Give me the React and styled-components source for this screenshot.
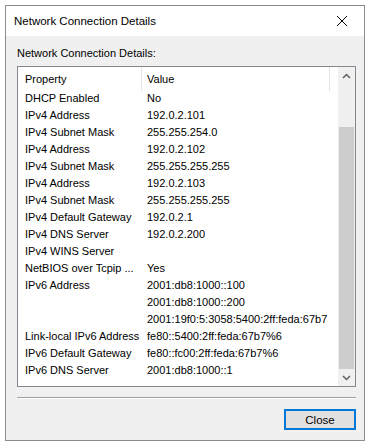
import React from "react";
import styled, { createGlobalStyle } from "styled-components";

const Global = createGlobalStyle`
  html, body { margin: 0; padding: 0; background: #ffffff; }
  body { font-family: "Liberation Sans", Arial, sans-serif; font-size: 11px; color: #000; }
`;

const Page = styled.div`
  padding: 5px;
`;

const Window = styled.div`
  width: 358px;
  height: 434px;
  border: 1px solid #8c8c8c;
  background: #f0f0f0;
  display: flex;
  flex-direction: column;
`;

const TitleBar = styled.div`
  height: 30px;
  background: #ffffff;
  display: flex;
  align-items: center;
  justify-content: space-between;
  padding: 0 8px 0 8px;
  font-size: 11.5px;
`;

const CloseX = styled.div`
  width: 28px;
  display: flex;
  justify-content: center;
  align-items: center;
`;

const Body = styled.div`
  flex: 1;
  display: flex;
  flex-direction: column;
  padding: 9px 8px 0 11px;
`;

const Label = styled.div`
  height: 17px;
  line-height: 17px;
  margin-bottom: 4px;
`;

const ListBox = styled.div`
  height: 319px;
  border: 1px solid #828790;
  background: #ffffff;
  display: flex;
`;

const ListContent = styled.div`
  flex: 1;
  display: flex;
  flex-direction: column;
  overflow: hidden;
`;

const Header = styled.div`
  height: 24px;
  display: grid;
  grid-template-columns: 124px 188px 1fr;
  align-items: stretch;
`;

const HeaderCell = styled.div`
  display: flex;
  align-items: center;
  padding-left: ${(p) => p.$pad}px;
  padding-bottom: 1px;
  border-right: ${(p) => (p.$sep ? "1px solid #e5e5e5" : "none")};
`;

const Row = styled.div`
  height: 17px;
  line-height: 15px;
  display: grid;
  grid-template-columns: 124px 1fr;
  align-items: start;
  white-space: nowrap;
`;

const Cell = styled.div`
  padding-left: ${(p) => p.$pad}px;
  overflow: hidden;
`;

const ScrollBar = styled.div`
  width: 17px;
  background: #f0f0f0;
  display: flex;
  flex-direction: column;
`;

const ArrowBox = styled.div`
  height: 17px;
  display: flex;
  align-items: center;
  justify-content: center;
`;

const Track = styled.div`
  flex: 1;
  display: flex;
  flex-direction: column;
  padding: 43px 0 0 0;
`;

const Thumb = styled.div`
  flex: 1;
  margin: 0 1px;
  background: #cdcdcd;
`;

const Separator = styled.div`
  height: 0;
  margin: 10px 0 0 0;
  border-top: 1px solid #a0a0a0;
  border-bottom: 1px solid #ffffff;
`;

const Footer = styled.div`
  display: flex;
  justify-content: flex-end;
  padding-top: 10px;
`;

const Button = styled.button`
  width: 72px;
  height: 21px;
  border: 2px solid #0078d7;
  background: #e1e1e1;
  font-family: inherit;
  font-size: 11.5px;
  padding: 0;
  color: #000;
`;

const rows = [
  ["DHCP Enabled", "No"],
  ["IPv4 Address", "192.0.2.101"],
  ["IPv4 Subnet Mask", "255.255.254.0"],
  ["IPv4 Address", "192.0.2.102"],
  ["IPv4 Subnet Mask", "255.255.255.255"],
  ["IPv4 Address", "192.0.2.103"],
  ["IPv4 Subnet Mask", "255.255.255.255"],
  ["IPv4 Default Gateway", "192.0.2.1"],
  ["IPv4 DNS Server", "192.0.2.200"],
  ["IPv4 WINS Server", ""],
  ["NetBIOS over Tcpip ...", "Yes"],
  ["IPv6 Address", "2001:db8:1000::100"],
  ["", "2001:db8:1000::200"],
  ["", "2001:19f0:5:3058:5400:2ff:feda:67b7"],
  ["Link-local IPv6 Address", "fe80::5400:2ff:feda:67b7%6"],
  ["IPv6 Default Gateway", "fe80::fc00:2ff:feda:67b7%6"],
  ["IPv6 DNS Server", "2001:db8:1000::1"],
];

export default function App() {
  return (
    <Page>
      <Global />
      <Window>
        <TitleBar>
          <span>Network Connection Details</span>
          <CloseX>
            <svg width="12" height="12" viewBox="0 0 12 12">
              <path d="M1 1 L11 11 M11 1 L1 11" stroke="#000" strokeWidth="1" fill="none" />
            </svg>
          </CloseX>
        </TitleBar>
        <Body>
          <Label>Network Connection Details:</Label>
          <ListBox>
            <ListContent>
              <Header>
                <HeaderCell $pad={7} $sep>Property</HeaderCell>
                <HeaderCell $pad={5} $sep>Value</HeaderCell>
                <HeaderCell $pad={0} />
              </Header>
              {rows.map(([k, v], i) => (
                <Row key={i}>
                  <Cell $pad={7}>{k}</Cell>
                  <Cell $pad={5}>{v}</Cell>
                </Row>
              ))}
            </ListContent>
            <ScrollBar>
              <ArrowBox>
                <svg width="9" height="6" viewBox="0 0 9 6">
                  <path d="M1 5 L4.5 1.5 L8 5" stroke="#606060" strokeWidth="1.5" fill="none" />
                </svg>
              </ArrowBox>
              <Track>
                <Thumb />
              </Track>
              <ArrowBox>
                <svg width="9" height="6" viewBox="0 0 9 6">
                  <path d="M1 1 L4.5 4.5 L8 1" stroke="#606060" strokeWidth="1.5" fill="none" />
                </svg>
              </ArrowBox>
            </ScrollBar>
          </ListBox>
          <Separator />
          <Footer>
            <Button>Close</Button>
          </Footer>
        </Body>
      </Window>
    </Page>
  );
}
